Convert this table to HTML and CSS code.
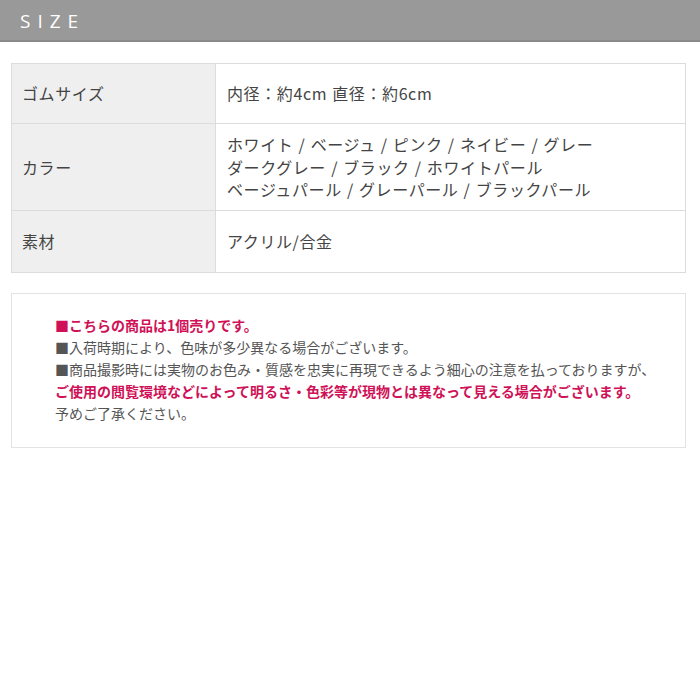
FILE: index.html
```html
<!DOCTYPE html>
<html lang="ja">
<head>
    <meta charset="UTF-8">
    <title>SIZE</title>
    <link rel="stylesheet" href="styles.css">
</head>
<body>
    <div class="heading">SIZE</div>
    <table class="spec">
        <tr>
            <th>ゴムサイズ</th>
            <td>内径：約4cm 直径：約6cm</td>
        </tr>
        <tr>
            <th>カラー</th>
            <td>ホワイト / ベージュ / ピンク / ネイビー / グレー<br>ダークグレー / ブラック / ホワイトパール<br>ベージュパール / グレーパール / ブラックパール</td>
        </tr>
        <tr class="last">
            <th>素材</th>
            <td>アクリル/合金</td>
        </tr>
    </table>
    <div class="notes">
        <p class="pink">■こちらの商品は1個売りです。</p>
        <p>■入荷時期により、色味が多少異なる場合がございます。</p>
        <p>■商品撮影時には実物のお色み・質感を忠実に再現できるよう細心の注意を払っておりますが、</p>
        <p class="pink">ご使用の閲覧環境などによって明るさ・色彩等が現物とは異なって見える場合がございます。</p>
        <p>予めご了承ください。</p>
    </div>
</body>
</html>
```

FILE: styles.css
```css
body {
    margin: 0;
    background: #fff;
    font-family: "Noto Sans CJK JP", "Noto Sans", sans-serif;
    color: #444;
}
.heading {
    height: 40px;
    line-height: 42px;
    background: #999;
    border-bottom: 2px solid #8a8a8a;
    padding-left: 20px;
    color: #fff;
    font-family: "Open Sans", "Noto Sans", sans-serif;
    font-size: 19px;
    letter-spacing: 7px;
}
.spec {
    margin: 21px 14px 0 11px;
    width: 675px;
    border-collapse: collapse;
    font-size: 16px;
    line-height: 22.5px;
    letter-spacing: 0.6px;
    word-spacing: 1px;
}
.spec th,
.spec td {
    border: 1px solid #dcdcdc;
    height: 41px;
    padding: 9px 11px;
    text-align: left;
    font-weight: normal;
    vertical-align: middle;
}
.spec th {
    width: 182px;
    background: #efefef;
    padding-left: 10px;
}
.spec .last th,
.spec .last td {
    height: 43px;
}
.notes {
    margin: 20px 14px 0 11px;
    border: 1px solid #e3e3e3;
    padding: 20px 20px 23px 43px;
    font-size: 14px;
    line-height: 22px;
    color: #555;
}
.notes p {
    margin: 0;
}
.notes .pink {
    color: #cf1257;
    font-weight: bold;
}
```
